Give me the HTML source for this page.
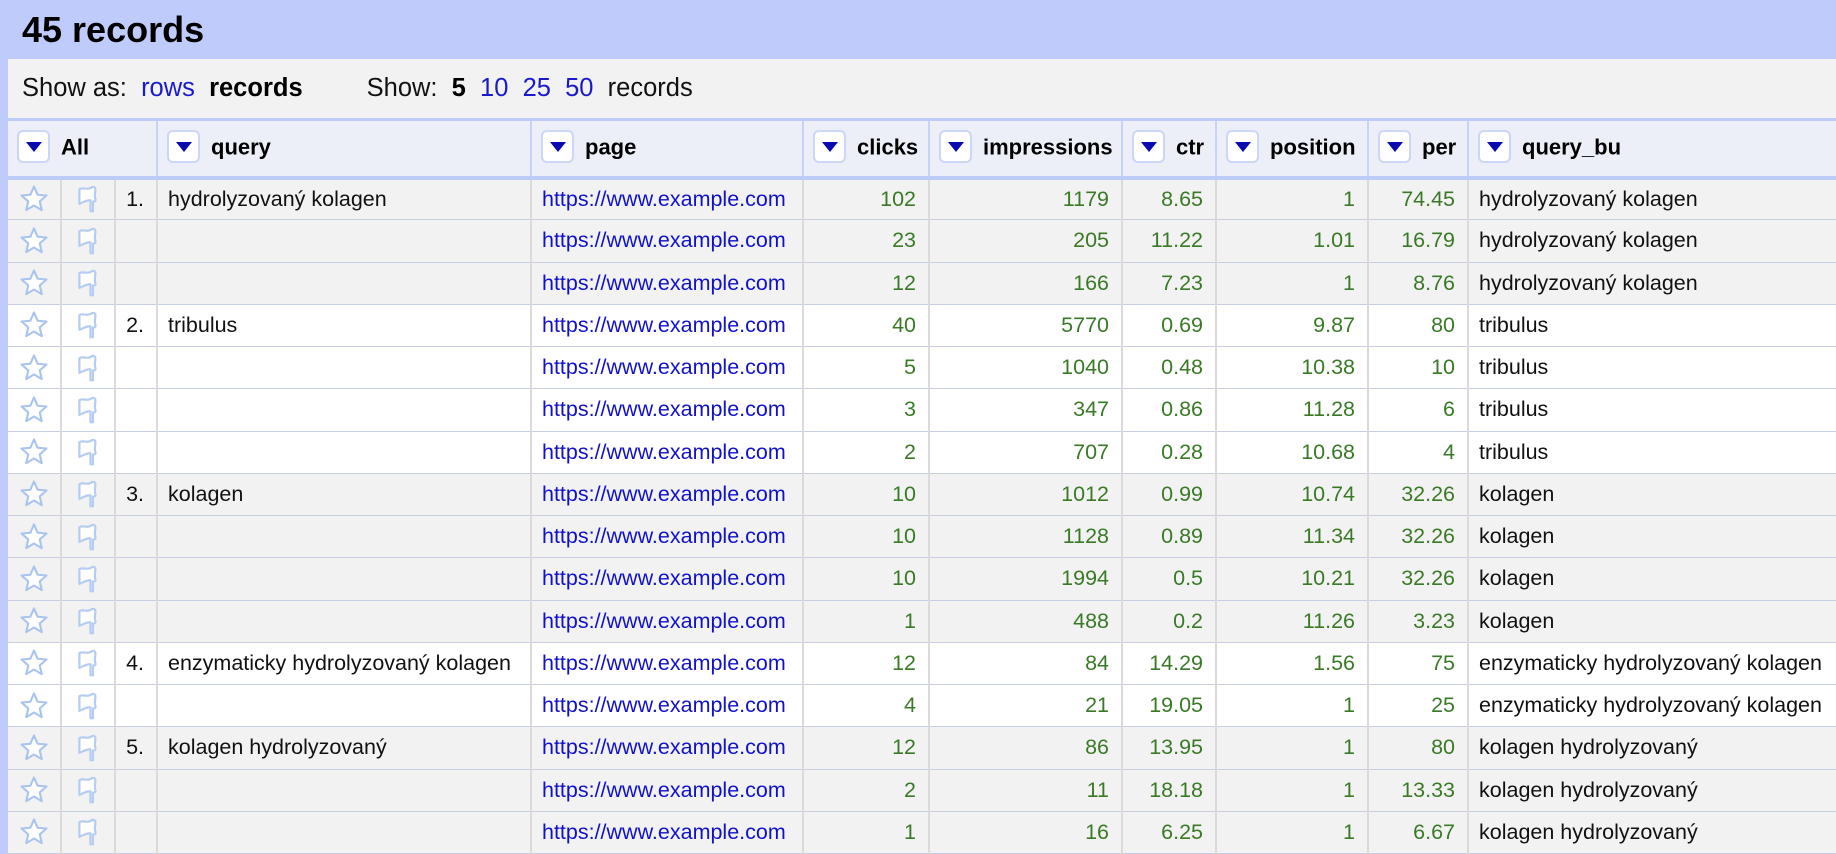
<!DOCTYPE html>
<html><head><meta charset="utf-8"><style>
*{margin:0;padding:0;box-sizing:border-box}
body{width:1836px;height:852px;overflow:hidden;background:#bfcbfb;font-family:"Liberation Sans",sans-serif;color:#111;position:relative}
.title{position:absolute;left:22px;top:9px;font-size:36px;font-weight:bold;color:#000}
.tb{position:absolute;left:8px;top:59px;width:1828px;height:59px;background:#f2f2f2;font-size:25.5px;line-height:59px;padding-left:14px;color:#111}
.tb a{color:#1a1acc;text-decoration:none}
.tb b{color:#000}
table{position:absolute;left:8px;top:118px;border-collapse:collapse;table-layout:fixed;width:1860px;font-size:21.5px}
th{height:58px;background:#eceff8;border-top:3px solid #bccbf7;border-bottom:4px solid #bccbf7;border-left:2px solid #c6d2f7;text-align:left;font-weight:bold;color:#000;white-space:nowrap;padding-left:9px;font-size:22px}
th:first-child{border-left:none}
.dd{display:inline-block;width:33px;height:33px;background:#fff;border:2px solid #ccd6f7;border-radius:6px;vertical-align:middle;margin-right:11px;position:relative;top:-2px}
.dd:after{content:"";position:absolute;left:7px;top:10px;border-left:8px solid transparent;border-right:8px solid transparent;border-top:10px solid #0a0ab0}
td{height:42.25px;border-left:2px solid #dadada;border-bottom:1px dotted #cfcfcf;white-space:nowrap;overflow:hidden;padding:0 10px}
td:first-child{border-left:none}
tr.g td{background:#f2f2f2}
tr.w td{background:#fff}
.n{text-align:right;color:#3a7a27;padding-right:12px}
.u{color:#1111cc}
.ic{padding:0;text-align:center}
.ic svg{display:block;margin:auto}
.ix{text-align:right;padding-right:12px}
</style></head><body>
<div class="title">45 records</div>
<div class="tb">Show as:&nbsp; <a>rows</a>&nbsp; <b>records</b><span style="display:inline-block;width:64px"></span>Show:&nbsp; <b>5</b>&nbsp; <a>10</a>&nbsp; <a>25</a>&nbsp; <a>50</a>&nbsp; records</div>
<table>
<colgroup><col style="width:53px"><col style="width:54px"><col style="width:42px"><col style="width:374px"><col style="width:272px"><col style="width:126px"><col style="width:193px"><col style="width:94px"><col style="width:152px"><col style="width:100px"><col style="width:400px"></colgroup>
<tr><th colspan="3"><span class="dd"></span>All</th><th><span class="dd"></span>query</th><th><span class="dd"></span>page</th><th><span class="dd"></span>clicks</th><th><span class="dd"></span>impressions</th><th><span class="dd"></span>ctr</th><th><span class="dd"></span>position</th><th><span class="dd"></span>per</th><th><span class="dd"></span>query_bu</th></tr>
<tr class="g"><td class="ic"><svg width="30" height="30" viewBox="0 0 24 24"><path d="M12 2l2.9 6.6 7.1.6-5.4 4.7 1.6 7L12 17.2 5.8 20.9l1.6-7L2 9.2l7.1-.6z" fill="#fff" stroke="#a9c4ee" stroke-width="1.7" stroke-linejoin="round"/></svg></td><td class="ic"><svg width="30" height="32" viewBox="0 0 24 26"><path d="M5 5c3-2 6 1 9-1s4 0 4 1c0 3-1 5 0 8 .5 2-1 2-2 2v8h-2V14c-3 0-5 1-7 2L5 17z" fill="#fff" stroke="#b5cdf2" stroke-width="1.8" stroke-linejoin="round"/></svg></td><td class="ix">1.</td><td>hydrolyzovaný kolagen</td><td class="u">https://www.example.com</td><td class="n">102</td><td class="n">1179</td><td class="n">8.65</td><td class="n">1</td><td class="n">74.45</td><td>hydrolyzovaný kolagen</td></tr>
</table>
<script>
var d=[
["g","","","23","205","11.22","1.01","16.79","hydrolyzovaný kolagen"],
["g","","","12","166","7.23","1","8.76","hydrolyzovaný kolagen"],
["w","2.","tribulus","40","5770","0.69","9.87","80","tribulus"],
["w","","","5","1040","0.48","10.38","10","tribulus"],
["w","","","3","347","0.86","11.28","6","tribulus"],
["w","","","2","707","0.28","10.68","4","tribulus"],
["g","3.","kolagen","10","1012","0.99","10.74","32.26","kolagen"],
["g","","","10","1128","0.89","11.34","32.26","kolagen"],
["g","","","10","1994","0.5","10.21","32.26","kolagen"],
["g","","","1","488","0.2","11.26","3.23","kolagen"],
["w","4.","enzymaticky hydrolyzovaný kolagen","12","84","14.29","1.56","75","enzymaticky hydrolyzovaný kolagen"],
["w","","","4","21","19.05","1","25","enzymaticky hydrolyzovaný kolagen"],
["g","5.","kolagen hydrolyzovaný","12","86","13.95","1","80","kolagen hydrolyzovaný"],
["g","","","2","11","18.18","1","13.33","kolagen hydrolyzovaný"],
["g","","","1","16","6.25","1","6.67","kolagen hydrolyzovaný"]];
var t=document.querySelector("table"),f=t.rows[1];
d.forEach(function(r){var n=f.cloneNode(true);n.className=r[0];var c=n.cells;c[2].textContent=r[1];c[3].textContent=r[2];c[5].textContent=r[3];c[6].textContent=r[4];c[7].textContent=r[5];c[8].textContent=r[6];c[9].textContent=r[7];c[10].textContent=r[8];t.tBodies[0].appendChild(n);});
</script>
</body></html>
